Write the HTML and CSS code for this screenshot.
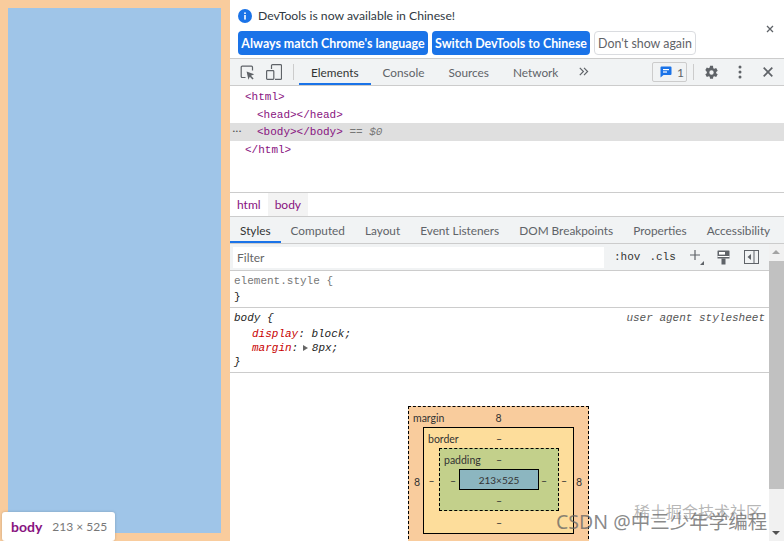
FILE: index.html
```html
<!DOCTYPE html>
<html lang="en">
<head>
  <meta charset="UTF-8">
  <meta name="viewport" content="width=device-width, initial-scale=1.0">
  <title>DevTools</title>
  <link rel="stylesheet" href="styles.css">
</head>
<body>
  <div class="page-pane">
    <div class="page-body"></div>
    <div class="size-tip"><b>body</b><span>213 × 525</span></div>
  </div>

  <div class="devtools">
    <div class="infobar">
      <div class="info-line">
        <svg class="info-icon" width="14" height="14" viewBox="0 0 14 14"><circle cx="7" cy="7" r="7" fill="#1a73e8"/><rect x="6.2" y="6" width="1.6" height="4.6" fill="#fff"/><rect x="6.2" y="3.4" width="1.6" height="1.6" fill="#fff"/></svg>
        <span>DevTools is now available in Chinese!</span>
        <svg class="info-close" width="8" height="8" viewBox="0 0 8 8"><path d="M1 1l6 6M7 1L1 7" stroke="#5f6368" stroke-width="1.3"/></svg>
      </div>
      <div class="info-buttons">
        <button class="btn-primary">Always match Chrome's language</button>
        <button class="btn-primary">Switch DevTools to Chinese</button>
        <button class="btn-plain">Don't show again</button>
      </div>
    </div>

    <div class="toolbar">
      <svg class="tool-icon" width="15" height="15" viewBox="0 0 15 15"><path d="M5.5 12.5H2.2a1 1 0 0 1-1-1V2.2a1 1 0 0 1 1-1h9.3a1 1 0 0 1 1 1v3.3" fill="none" stroke="#5f6368" stroke-width="1.2"/><path d="M6.6 6.6l7.6 2.7-3.2 1.5 2.6 2.7-1.1 1-2.7-2.7-1.4 3z" fill="#5f6368"/></svg>
      <svg class="tool-icon device" width="16" height="16" viewBox="0 0 16 16"><path d="M5.5 5V1.6a1 1 0 0 1 1-1h8a1 1 0 0 1 1 1v12.8a1 1 0 0 1-1 1H9" fill="none" stroke="#5f6368" stroke-width="1.2"/><rect x="0.6" y="6.6" width="7.2" height="8.8" rx="0.8" fill="none" stroke="#5f6368" stroke-width="1.2"/></svg>
      <span class="tool-sep"></span>
      <div class="main-tabs">
        <span class="main-tab active">Elements</span>
        <span class="main-tab">Console</span>
        <span class="main-tab">Sources</span>
        <span class="main-tab">Network</span>
      </div>
      <svg class="more-tabs" width="10" height="9" viewBox="0 0 10 9"><path d="M0.8 0.8l3.6 3.7-3.6 3.7M5 0.8l3.6 3.7L5 8.2" fill="none" stroke="#5f6368" stroke-width="1.2"/></svg>
      <div class="issues">
        <svg width="12" height="12" viewBox="0 0 12 12"><path d="M1.5 0.5h9a1 1 0 0 1 1 1v6.6a1 1 0 0 1-1 1H3.5L0.5 11.5V1.5a1 1 0 0 1 1-1z" fill="#1a73e8"/><rect x="3" y="3" width="6" height="1.2" fill="#fff"/><rect x="3" y="5.4" width="4" height="1.2" fill="#fff"/></svg>
        <span>1</span>
      </div>
      <span class="tool-sep right"></span>
      <svg class="gear" width="15" height="15" viewBox="0 0 24 24"><path fill="#5f6368" fill-rule="evenodd" d="M19.4 13a7.5 7.5 0 0 0 0-2l2.5-1.9-2.4-4.2-3 1.2a7.5 7.5 0 0 0-1.7-1L14.4 1H9.6l-.4 3.1a7.5 7.5 0 0 0-1.7 1l-3-1.2-2.4 4.2L4.6 11a7.5 7.5 0 0 0 0 2l-2.5 1.9 2.4 4.2 3-1.2a7.5 7.5 0 0 0 1.7 1l.4 3.1h4.8l.4-3.1a7.5 7.5 0 0 0 1.7-1l3 1.2 2.4-4.2zM12 15.5a3.5 3.5 0 1 1 0-7 3.5 3.5 0 0 1 0 7z"/></svg>
      <svg class="kebab" width="4" height="14" viewBox="0 0 4 14"><circle cx="2" cy="2" r="1.5" fill="#5f6368"/><circle cx="2" cy="7" r="1.5" fill="#5f6368"/><circle cx="2" cy="12" r="1.5" fill="#5f6368"/></svg>
      <svg class="dock-close" width="10" height="10" viewBox="0 0 10 10"><path d="M0.7 0.7l8.6 8.6M9.3 0.7L0.7 9.3" stroke="#5f6368" stroke-width="1.7"/></svg>
    </div>

    <div class="dom-tree">
      <div class="dom-line"><span class="tag">&lt;html&gt;</span></div>
      <div class="dom-line indent"><span class="tag">&lt;head&gt;&lt;/head&gt;</span></div>
      <div class="dom-line indent selected"><span class="dots">•••</span><span class="tag">&lt;body&gt;&lt;/body&gt;</span> <i>== $0</i></div>
      <div class="dom-line"><span class="tag">&lt;/html&gt;</span></div>
    </div>

    <div class="crumbs">
      <span class="crumb">html</span>
      <span class="crumb current">body</span>
    </div>

    <div class="side-tabs">
      <span class="side-tab active">Styles</span>
      <span class="side-tab">Computed</span>
      <span class="side-tab">Layout</span>
      <span class="side-tab">Event Listeners</span>
      <span class="side-tab">DOM Breakpoints</span>
      <span class="side-tab">Properties</span>
      <span class="side-tab">Accessibility</span>
    </div>

    <div class="styles-area">
      <div class="styles-main">
        <div class="filter-bar">
          <div class="filter-input">Filter</div>
          <span class="filter-btn hov">:hov</span>
          <span class="filter-btn cls">.cls</span>
          <svg class="plus" width="17" height="17" viewBox="0 0 17 17"><path d="M6 1v10M1 6h10" stroke="#5f6368" stroke-width="1.2"/><path d="M15 12v4h-4z" fill="#5f6368"/></svg>
          <svg class="paint" width="13" height="15" viewBox="0 0 13 15"><path d="M1 0.5h11a.5.5 0 0 1 .5.5v7.5H.5V1A.5.5 0 0 1 1 .5z" fill="#5f6368"/><rect x="2" y="2" width="6" height="2.6" fill="#fff"/><rect x="0.5" y="6" width="12" height="1" fill="#fff"/><rect x="4.5" y="8.5" width="4" height="6" fill="#5f6368"/></svg>
          <svg class="toggle" width="15" height="14" viewBox="0 0 15 14"><rect x="0.5" y="0.5" width="14" height="13" fill="none" stroke="#5f6368"/><rect x="9.5" y="1" width="1" height="12" fill="#5f6368"/><path d="M7 4v6L3.5 7z" fill="#5f6368"/></svg>
        </div>

        <div class="rule">
          <div class="code grey">element.style {</div>
          <div class="code">}</div>
        </div>
        <div class="rule body-rule">
          <div class="code rule-head"><i>body {</i><i class="origin">user agent stylesheet</i></div>
          <div class="code prop"><i><span class="prop-name">display</span>: block;</i></div>
          <div class="code prop"><i><span class="prop-name">margin</span>: <span class="arrow"></span>8px;</i></div>
          <div class="code"><i>}</i></div>
        </div>

        <div class="box-wrap">
          <div class="box margin-box">
            <span class="box-label">margin</span>
            <span class="top">8</span>
            <span class="left">8</span>
            <div class="box border-box">
              <span class="box-label">border</span>
              <span class="top">–</span>
              <span class="left">–</span>
              <div class="box padding-box">
                <span class="box-label">padding</span>
                <span class="top">–</span>
                <span class="left">–</span>
                <div class="content-box">213×525</div>
                <span class="right">–</span>
                <span class="bottom">–</span>
              </div>
              <span class="right">–</span>
              <span class="bottom">–</span>
            </div>
            <span class="right">8</span>
            <span class="bottom">–</span>
          </div>
        </div>
      </div>

      <div class="scrollbar">
        <span class="arrow-up"></span>
        <span class="thumb"></span>
        <span class="arrow-down"></span>
      </div>
    </div>
  </div>

  <div class="mark mark-csdn">CSDN @中三少年学编程</div>
  <div class="mark mark-juejin">稀土掘金技术社区</div>
</body>
</html>
```

FILE: styles.css
```css
html, body {
  height: 100%;
}

body {
  margin: 0;
  display: flex;
  height: 541px;
  overflow: hidden;
  font-family: Lato, "Open Sans", Arial, sans-serif;
  font-size: 12px;
  color: #333;
  background-color: #fff;
}

/* inspected page */
.page-pane {
  position: relative;
  box-sizing: border-box;
  width: 230px;
  flex: none;
  padding: 8px 9px 8px 8px;
  background-color: #f9cc9d;
}

.page-body {
  height: 525px;
  background-color: #9fc5e8;
}

.size-tip {
  position: absolute;
  left: 2px;
  top: 512px;
  display: flex;
  gap: 10px;
  align-items: center;
  height: 29px;
  padding: 0 8px 0 9px;
  background-color: #fff;
  border-radius: 3px;
  box-shadow: 0 0 3px rgba(0, 0, 0, 0.2);
  color: #777;
}

.size-tip b {
  color: #881280;
  font-size: 14px;
}

/* devtools */
.devtools {
  flex: 1;
  min-width: 0;
  display: flex;
  flex-direction: column;
}

.infobar {
  height: 59px;
  flex: none;
  box-sizing: border-box;
  padding: 8px 8px 0;
  border-bottom: 1px solid #ccc;
}

.info-line {
  display: flex;
  align-items: center;
  gap: 6px;
  height: 15px;
  font-size: 12.2px;
  color: #303942;
}

.info-close {
  margin-left: auto;
  margin-right: 2px;
  margin-top: 26px;
}

.info-buttons {
  display: flex;
  gap: 4px;
  margin-top: 8px;
}

.info-buttons button {
  height: 24px;
  padding: 0;
  border-radius: 4px;
  font-family: Lato, sans-serif;
  font-size: 12.4px;
  white-space: nowrap;
}

.btn-primary {
  width: 190px;
  border: none;
  background-color: #1a73e8;
  color: #fff;
  font-weight: 700;
}

.btn-primary + .btn-primary {
  width: 158px;
}

.btn-plain {
  width: 102px;
  border: 1px solid #dadce0;
  background-color: #fff;
  color: #5f6368;
}

.toolbar {
  height: 27px;
  flex: none;
  box-sizing: border-box;
  display: flex;
  align-items: center;
  background-color: #f1f3f4;
  border-bottom: 1px solid #ccc;
}

.tool-icon {
  margin-left: 10px;
  flex: none;
}

.tool-icon.device {
  margin-left: 11px;
}

.tool-sep {
  width: 1px;
  height: 16px;
  margin-left: 11px;
  background-color: #ccc;
  flex: none;
}

.tool-sep.right {
  margin-left: 6px;
}

.main-tabs {
  display: flex;
  height: 100%;
  margin-left: 5px;
}

.main-tab {
  display: flex;
  align-items: center;
  box-sizing: border-box;
  height: 100%;
  padding: 0 12px;
  font-size: 11.8px;
  color: #5f6368;
}

.main-tab.active {
  color: #333;
  border-bottom: 2px solid #1a73e8;
  padding-top: 2px;
}

.more-tabs {
  margin-left: 9px;
  margin-top: -2px;
  flex: none;
}

.issues {
  display: flex;
  align-items: center;
  gap: 5px;
  box-sizing: border-box;
  height: 20px;
  width: 35px;
  margin-left: auto;
  padding-left: 7px;
  border: 1px solid #ccc;
  border-radius: 2px;
  color: #5f6368;
}

.gear {
  margin-left: 10px;
  flex: none;
}

.kebab {
  margin-left: 19px;
  flex: none;
}

.dock-close {
  margin-left: 21px;
  margin-right: 11px;
  flex: none;
}

.dom-tree {
  height: 107px;
  flex: none;
  box-sizing: border-box;
  padding-top: 2px;
  border-bottom: 1px solid #ccc;
}

.dom-line {
  position: relative;
  height: 17.5px;
  line-height: 19.5px;
  padding-left: 15px;
  font-family: "Liberation Mono", monospace;
  font-size: 11px;
  white-space: pre;
}

.dom-line.indent {
  padding-left: 27px;
}

.dom-line.selected {
  background-color: #dfdfdf;
}

.dom-line i {
  color: #777;
}

.tag {
  color: #881280;
}

.dots {
  position: absolute;
  left: 2px;
  top: -1px;
  font-size: 6px;
  letter-spacing: -0.5px;
  color: #555;
}

.crumbs {
  height: 24px;
  flex: none;
  box-sizing: border-box;
  display: flex;
  border-bottom: 1px solid #ccc;
}

.crumb {
  display: flex;
  align-items: center;
  padding: 0 7px;
  color: #881280;
}

.crumb.current {
  background-color: #f3f3f3;
}

.side-tabs {
  height: 27px;
  flex: none;
  box-sizing: border-box;
  display: flex;
  overflow: hidden;
  background-color: #f1f3f4;
  border-bottom: 1px solid #ccc;
}

.side-tab {
  display: flex;
  align-items: center;
  box-sizing: border-box;
  height: 100%;
  padding: 0 10px;
  white-space: nowrap;
  font-size: 11.8px;
  color: #5f6368;
}

.side-tab.active {
  color: #333;
  border-bottom: 2px solid #1a73e8;
  padding-top: 2px;
}

.styles-area {
  flex: 1;
  min-height: 0;
  display: flex;
}

.styles-main {
  flex: 1;
  min-width: 0;
  overflow: hidden;
}

.filter-bar {
  height: 27px;
  box-sizing: border-box;
  display: flex;
  align-items: center;
  padding-left: 3px;
  background-color: #f1f3f4;
  border-bottom: 1px solid #ccc;
}

.filter-input {
  width: 371px;
  height: 21px;
  box-sizing: border-box;
  padding-left: 4px;
  line-height: 21px;
  background-color: #fff;
  color: #666;
  flex: none;
}

.filter-btn {
  font-family: "Liberation Mono", monospace;
  font-size: 11px;
  color: #333;
  flex: none;
}

.hov {
  margin-left: 10px;
}

.cls {
  margin-left: 9px;
}

.plus {
  margin-left: 13px;
  flex: none;
}

.paint {
  margin-left: 11px;
  flex: none;
}

.toggle {
  margin-left: 14px;
  flex: none;
}

.rule {
  box-sizing: border-box;
  height: 37px;
  padding: 2px 0 0 4px;
  border-bottom: 1px solid #ccc;
}

.rule.body-rule {
  height: 65px;
  padding-top: 2px;
}

.code {
  height: 15.5px;
  line-height: 16px;
  font-family: "Liberation Mono", monospace;
  font-size: 11px;
  color: #222;
}

.body-rule .code {
  height: 14.5px;
}

.body-rule .rule-head {
  height: 15.5px;
}

.body-rule .prop + .prop {
  height: 13.5px;
}

.code.grey {
  color: #777;
}

.rule-head {
  display: flex;
  justify-content: space-between;
  padding-right: 4px;
}

.origin {
  color: #555;
}

.prop {
  padding-left: 18px;
}

.prop-name {
  color: #c80000;
}

.arrow {
  display: inline-block;
  width: 0;
  height: 0;
  margin: 0 4px 0 -2px;
  border-left: 5px solid #666;
  border-top: 3px solid transparent;
  border-bottom: 3px solid transparent;
}

/* box model */
.box-wrap {
  display: flex;
  justify-content: center;
  padding: 33px 2px 0 0;
  color: #333;
  font-size: 10.5px;
}

.box {
  position: relative;
  box-sizing: border-box;
  display: grid;
  justify-items: center;
  align-items: center;
}

.margin-box {
  width: 181px;
  height: 148px;
  flex: none;
  grid-template-columns: 14px 151px 14px;
  grid-template-rows: 20px 107px 1fr;
  border: 1px dashed #000;
  background-color: #f9cc9d;
}

.border-box {
  width: 151px;
  height: 107px;
  grid-template-columns: 15px 120px 14px;
  grid-template-rows: 20px 63px 1fr;
  border: 1px solid #000;
  background-color: #fddd9b;
}

.padding-box {
  width: 120px;
  height: 63px;
  grid-template-columns: 19px 80px 19px;
  grid-template-rows: 20px 21px 1fr;
  border: 1px dashed #000;
  background-color: #c3d08b;
}

.content-box {
  box-sizing: border-box;
  width: 80px;
  height: 21px;
  line-height: 21px;
  font-size: 10px;
  text-align: center;
  border: 1px solid #000;
  background-color: #8cb6c0;
}

.box .top,
.box .left,
.box .right,
.box .bottom {
  padding-top: 2px;
}

.box .top {
  grid-column: 2;
  grid-row: 1;
}

.box .left {
  grid-column: 1;
  grid-row: 2;
}

.box .right {
  grid-column: 3;
  grid-row: 2;
}

.box .bottom {
  grid-column: 2;
  grid-row: 3;
}

.margin-box > .left {
  margin-left: 2px;
}

.margin-box > .right,
.border-box > .right {
  margin-right: 4px;
}

.padding-box > .left {
  margin-left: 7px;
}

.padding-box > .right {
  margin-right: 9px;
}

.box > .box,
.box > .content-box {
  grid-column: 2;
  grid-row: 2;
}

.box-label {
  position: absolute;
  left: 4px;
  top: 5px;
}

/* scrollbar */
.scrollbar {
  width: 15px;
  flex: none;
  position: relative;
  background-color: #f1f1f1;
}

.thumb {
  position: absolute;
  left: 0;
  top: 17px;
  width: 15px;
  height: 228px;
  background-color: #c1c1c1;
}

.arrow-up,
.arrow-down {
  position: absolute;
  left: 3px;
  width: 0;
  height: 0;
  border-left: 4px solid transparent;
  border-right: 4px solid transparent;
}

.arrow-up {
  top: 6px;
  border-bottom: 4px solid #a3a3a3;
}

.arrow-down {
  bottom: 6px;
  border-top: 4px solid #505050;
}

/* watermark */
.mark {
  position: absolute;
  white-space: nowrap;
  font-family: "Noto Sans", "Noto Sans CJK SC", sans-serif;
  pointer-events: none;
}

.mark-csdn {
  left: 556px;
  top: 506px;
  font-size: 19.5px;
  color: rgba(100, 100, 100, 0.75);
}

.mark-juejin {
  left: 634px;
  top: 499px;
  font-family: "Noto Sans CJK SC", sans-serif;
  font-size: 16px;
  color: rgba(120, 120, 120, 0.55);
}
```
